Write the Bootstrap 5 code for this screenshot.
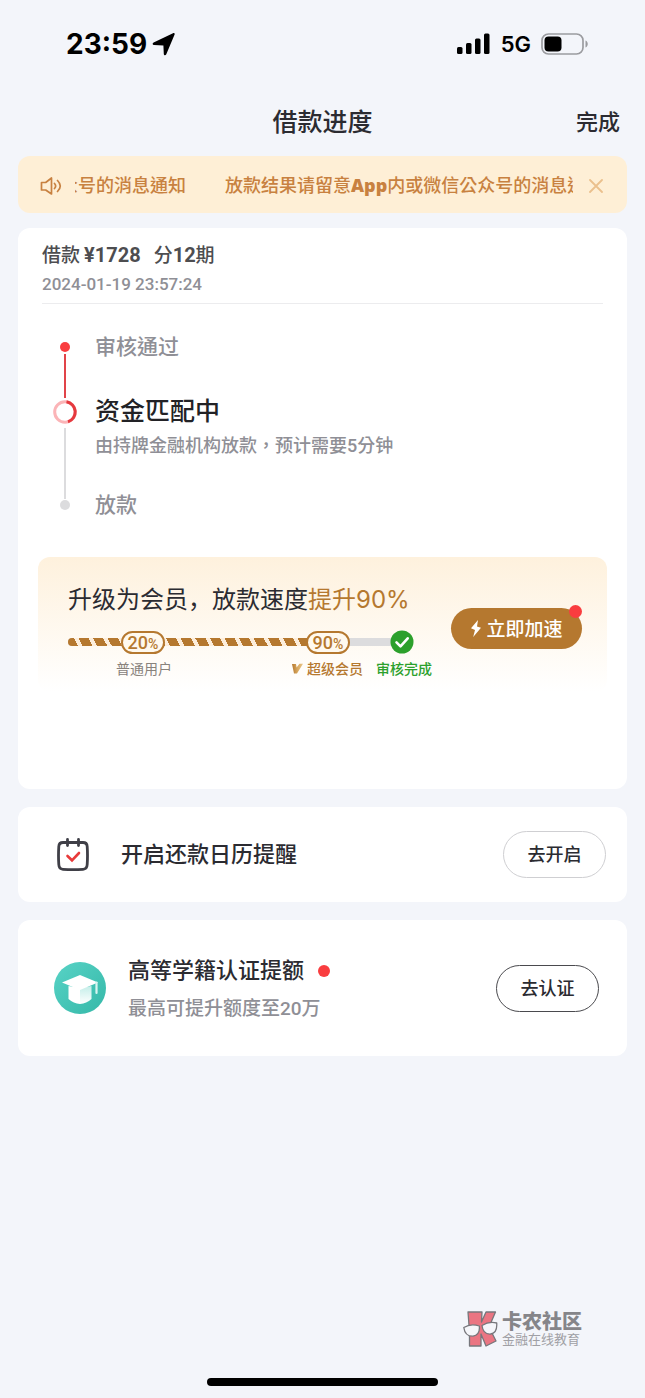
<!DOCTYPE html>
<html lang="zh-CN">
<head>
<meta charset="utf-8">
<meta name="viewport" content="width=device-width, initial-scale=1">
<title>借款进度</title>
<link href="https://cdn.jsdelivr.net/npm/bootstrap@5.3.0/dist/css/bootstrap.min.css" rel="stylesheet">
<style>
:root{--ink:#2b2b31;--muted:#8f8f96;--gold:#b5782f;--amber:#c88140;--red:#f93d3f}
body{background:#f3f5fa;color:var(--ink);font-family:Roboto,"Noto Sans CJK TC",sans-serif;font-weight:500;line-height:24px}
svg{display:block;flex-shrink:0}
.statusbar{height:90px;padding:0 56px 2px 66px;color:#000;font-family:Inter,sans-serif}
.clock{font-size:28px;font-weight:700}
.network{font-size:22px;font-weight:600;margin:0 10px}
.titlebar{display:grid;grid-template-columns:1fr auto 1fr;align-items:center;height:66px;padding:0 25px}
.titlebar h1{font-size:25px;font-weight:500;line-height:32px}
.done-btn{font-size:22px;font-weight:500;line-height:32px;color:var(--ink);justify-self:end}
.page-body{padding:0 18px;gap:18px}
.notice{height:57px;margin-bottom:-3px;padding:2px 16px 0 22px;border-radius:12px;background:#feefd6;color:var(--amber);font-size:18px}
.ticker{margin:0 8px 0 12px;gap:39px;min-width:0}
.ticker span:first-child{margin-left:-15px}
.ticker b{font-family:"Open Sans",sans-serif;font-weight:800;line-height:1}
.panel{background:#fff;border-radius:12px}
.loan{padding:15px 20px 97px}
.loan-head{margin:0 4px;padding-bottom:7px;border-bottom:1px solid #ececee}
.loan-sum{font-size:19px;color:#4d4d50;gap:13px}
.loan-sum b{font-size:20px}
.loan-time{font-size:17px;color:var(--muted);padding-top:4px}
.steps{margin:31px 0 40px;padding-left:15px}
.step{gap:18px;font-size:21px;color:var(--muted)}
.step-1{min-height:65px}
.step-2{min-height:93px}
.rail{width:24px}
.dot{width:10px;height:10px;border-radius:50%;background:var(--red)}
.rail .dot{margin-top:7px}
.rail .dot-idle{background:#dcdcde}
.rail-line{width:2px;margin:2px 0;background:#dcdcde}
.step-1 .rail-line{background:#e14449}
.step-2 .rail-line{margin:4px 0 -6px}
.step h2{font-size:25px;font-weight:500;color:#222226;line-height:24px;margin-bottom:10px}
.step p{font-size:18px}
.vip{padding:27px 25px 12px 30px;border-radius:12px;background:linear-gradient(#fef1dd,#fff);font-family:Inter,"Noto Sans CJK SC",sans-serif}
.vip h2{font-size:24px;font-weight:400;line-height:32px;margin-bottom:14px}
.vip h2 span,.vip-tag{color:var(--gold)}
.vip-info{width:364px}
.track-row{height:24px;width:346px}
.track{left:0;right:12px;height:8px;background:#dcdcde}
.track-fill{background:repeating-linear-gradient(63deg,var(--gold) 0 9px,#fdeedc 9px 13px)}
.pct{width:44px;height:23px;border:2px solid var(--gold);border-radius:12px;background:#fff9ee;color:var(--gold);font:500 18px/20px Roboto,sans-serif}
.pct small{font-size:14px}
.pct-first{margin-left:53px}
.pct-second{margin-left:141px}
.labels{padding-left:48px;margin-top:2px;font-size:14px;font-family:"Noto Sans CJK SC",sans-serif;font-weight:400;color:#88827c}
.labels .finished{color:#2ca02c;margin-left:13px}
.vip-tag,.labels .finished{font-weight:500}
.boost-btn{height:41px;width:131px;border-radius:21px;background:var(--gold);color:#fff;font-size:19px;font-weight:500;font-family:"Noto Sans CJK SC",sans-serif}
.boost-btn:hover{background:#9d6525;color:#fff}
.alert-dot{width:13px;height:13px;top:-3px;right:0}
.feature{font-size:22px}
.feature h2{font-size:22px;font-weight:500;line-height:32px}
.feature p{font-size:19px;color:var(--muted);padding-top:10px}
.feature .dot{width:12px;height:12px;margin-left:14px}
.calendar{padding:24px 21px 24px 39px}
.school{padding:35px 28px 35px 36px;gap:22px}
.go-btn{width:103px;height:47px;border:1px solid #cfcfd2;border-radius:24px;color:var(--ink);font-size:18px;font-weight:500;padding:0}
.go-dark{border-color:#4a4a4e}
.brand{padding:0 63px 30px;gap:4px;color:#858589;font-family:"Noto Sans CJK SC",sans-serif}
.brand strong{font-size:20px;line-height:20px;font-weight:900}
.brand span{font-size:13px;line-height:16px;font-weight:400;color:#a0a0a5}
.home-bar{width:231px;height:8px;margin-bottom:12px;border-radius:4px;background:#000}
</style>
</head>
<body>
<div class="d-flex flex-column min-vh-100">
  <div class="statusbar d-flex align-items-center">
    <span class="clock">23:59</span>
    <svg class="ms-1" width="24" height="24" viewBox="0 0 24 24"><path d="M22 1.200c1.100-.5 2 .3 1.600 1.400L15.300 22.200c-.6 1.400-2.400 1.200-2.500-.3L12.400 13.400 3 13c-1.600-.1-1.900-1.900-.4-2.600z" fill="#000"/></svg>
    <svg class="ms-auto" width="34" height="22" viewBox="0 0 34 22"><g fill="#000"><rect x="0" y="14" width="5.500" height="7" rx="1.500"/><rect x="9" y="10" width="5.500" height="11" rx="1.500"/><rect x="18" y="5.500" width="5.500" height="15.500" rx="1.500"/><rect x="27" y="0.500" width="5.500" height="20.500" rx="1.500"/></g></svg>
    <span class="network">5G</span>
    <svg width="48" height="22" viewBox="0 0 48 22"><rect x="1" y="1" width="41" height="20" rx="6.500" fill="none" stroke="#9b9ca0" stroke-width="1.700"/><rect x="3.500" y="3.500" width="17" height="15" rx="4" fill="#000"/><path d="M44.500 7.500c3 1.200 3 5.800 0 7z" fill="#9b9ca0"/></svg>
  </div>

  <header class="titlebar">
    <span></span>
    <h1 class="m-0">借款进度</h1>
    <button type="button" class="btn done-btn border-0 p-0">完成</button>
  </header>

  <main class="page-body d-flex flex-column">
    <div class="notice d-flex align-items-center" role="status" lang="zh-TW">
      <svg width="23" height="20" viewBox="0 0 23 20" fill="none" stroke="#c88140" stroke-width="1.700" stroke-linejoin="round" stroke-linecap="round"><path d="M1.500 6.500h4.200L11.500 2v16L5.700 14H1.500z"/><path d="M14.500 7.500q2.300 2.500 0 5M17.500 4.500q5.500 5.500 0 11"/></svg>
      <div class="ticker d-flex flex-grow-1 overflow-hidden text-nowrap">
        <span>众号的消息通知</span>
        <span>放款结果请留意<b>App</b>内或微信公众号的消息通知</span>
      </div>
      <button type="button" class="btn border-0 p-2" aria-label="关闭"><svg width="14" height="14" viewBox="0 0 14 14" stroke="#ebc08d" stroke-width="1.800" stroke-linecap="round"><path d="M1 1l12 12M13 1L1 13"/></svg></button>
    </div>

    <section class="panel loan">
      <div class="loan-head">
        <div class="loan-sum d-flex"><span>借款<b class="ms-1">¥1728</b></span><span>分<b>12</b>期</span></div>
        <div class="loan-time">2024-01-19 23:57:24</div>
      </div>
      <ol class="steps list-unstyled" lang="zh-TW">
        <li class="step step-1 d-flex">
          <div class="rail d-flex flex-column align-items-center"><i class="dot"></i><i class="rail-line flex-grow-1"></i></div>
          <div>审核通过</div>
        </li>
        <li class="step step-2 d-flex">
          <div class="rail d-flex flex-column align-items-center">
            <svg width="24" height="24" viewBox="0 0 24 24" fill="none" stroke-width="3"><circle cx="12" cy="12" r="10.300" stroke="#fbb4b7"/><path d="M13.500 1.800a10.300 10.300 0 0 1 1.500 20" stroke="#e5393e"/></svg>
            <i class="rail-line flex-grow-1"></i>
          </div>
          <div><h2>资金匹配中</h2><p class="m-0">由持牌金融机构放款，预计需要5分钟</p></div>
        </li>
        <li class="step d-flex">
          <div class="rail d-flex flex-column align-items-center"><i class="dot dot-idle"></i></div>
          <div>放款</div>
        </li>
      </ol>
      <div class="vip d-flex justify-content-between align-items-center">
        <div class="vip-info">
          <h2 class="text-nowrap">升级为会员，放款速度<span>提升90%</span></h2>
          <div class="track-row position-relative d-flex align-items-center">
            <div class="track position-absolute rounded-pill overflow-hidden"><div class="track-fill h-100" style="width:78%"></div></div>
            <span class="pct pct-first position-relative text-center">20<small>%</small></span>
            <span class="pct pct-second position-relative text-center">90<small>%</small></span>
            <svg class="position-relative ms-auto" width="24" height="24" viewBox="0 0 24 24"><circle cx="12" cy="12" r="11.500" fill="#2ca02c"/><path d="M6.500 12.300l4 4 7.200-8" fill="none" stroke="#fff" stroke-width="2.600" stroke-linecap="round" stroke-linejoin="round"/></svg>
          </div>
          <div class="labels d-flex text-nowrap">
            <span>普通用户</span>
            <span class="vip-tag ms-auto d-flex align-items-center"><svg class="me-1" width="11" height="11" viewBox="0 0 11 11"><defs><linearGradient id="vg" x1="0" x2="1"><stop stop-color="#b5782f"/><stop offset=".5" stop-color="#d8a85f"/><stop offset="1" stop-color="#e9c689"/></linearGradient></defs><path d="M0 1h4l.6 3.500L7.500.8H11L5 10.500H2z" fill="url(#vg)"/></svg>超级会员</span>
            <span class="finished">审核完成</span>
          </div>
        </div>
        <button type="button" class="btn boost-btn border-0 p-0 position-relative d-flex align-items-center justify-content-center align-self-start mt-4">
          <svg class="me-1" width="12" height="17" viewBox="0 0 12 17"><path d="M8 0L1 8.300l4 1.600L3.200 17 11 7.800 7 6.500z" fill="#fff"/></svg>立即加速
          <i class="dot alert-dot position-absolute"></i>
        </button>
      </div>
    </section>

    <section class="panel feature calendar d-flex align-items-center" lang="zh-TW">
      <svg width="32" height="34" viewBox="0 0 32 34" fill="none" stroke="#3f3f47" stroke-width="2.800" stroke-linecap="round"><path d="M6 4.500h20q4 0 4.200 4 .6 9 0 18-.2 4.500-4.200 4.800-10 .8-20 0-4-.3-4.200-4.800-.6-9 0-18 .2-4 4.200-4z"/><path d="M10.500 1.500v6M21.500 1.500v6"/><path d="M10.500 18l4.500 4.300 7-7.300" stroke="#e83a3a" stroke-width="2.600"/></svg>
      <h2 class="my-0 me-auto ms-4 ps-2">开启还款日历提醒</h2>
      <button type="button" class="btn go-btn">去开启</button>
    </section>

    <section class="panel feature school d-flex align-items-center" lang="zh-TW">
      <svg width="52" height="52" viewBox="0 0 52 52"><defs><linearGradient id="tg" x1="0" y1="0" x2="1" y2="1"><stop stop-color="#58d3c6"/><stop offset="1" stop-color="#35b8a8"/></linearGradient><linearGradient id="cg" x1="0" y1="0" x2="0" y2="1"><stop stop-color="#c4eee9"/><stop offset="1" stop-color="#fff"/></linearGradient></defs><circle cx="26" cy="26" r="26" fill="url(#tg)"/><path d="M14.500 24v13q5 4.500 11.500 5V26z" fill="#fff"/><path d="M37.500 24v13q-5 4.500-11.500 5V26z" fill="url(#cg)"/><path d="M8 20.500L26 13l18 7.500L26 28z" fill="#fff"/><path d="M42.500 20.500V31" stroke="#d9f5f1" stroke-width="2.200" stroke-linecap="round"/></svg>
      <div class="me-auto">
        <div class="d-flex align-items-center"><h2 class="m-0">高等学籍认证提额</h2><i class="dot"></i></div>
        <p class="m-0">最高可提升额度至20万</p>
      </div>
      <button type="button" class="btn go-btn go-dark">去认证</button>
    </section>
  </main>

  <footer class="mt-auto">
    <div class="brand d-flex align-items-center justify-content-end">
      <svg width="35" height="38" viewBox="0 0 35 38" stroke="#77777c" stroke-width="1.300" stroke-linejoin="round"><path d="M5 2h14l-.5 10L23 2h9.500L26 17l7 14-10 5-5-12v12H6.500V22z" fill="#ea7582"/><path d="M.8 17.500q7-4.500 15.500-1.500 1 9-6.300 10.200Q2 26.500.8 17.500zM19 15.500q7-4.500 14.700-2.500.8 10-6.200 11-7.500.5-8.500-8.500z" fill="#f5f6fa"/></svg>
      <div class="d-flex flex-column"><strong>卡农社区</strong><span>金融在线教育</span></div>
    </div>
    <div class="home-bar mx-auto"></div>
  </footer>
</div>
<script src="https://cdn.jsdelivr.net/npm/bootstrap@5.3.0/dist/js/bootstrap.bundle.min.js"></script>
</body>
</html>
